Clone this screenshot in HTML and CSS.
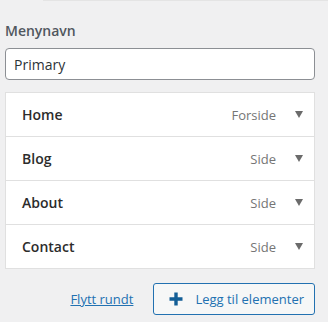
FILE: index.html
```html
<!DOCTYPE html>
<html lang="nb">
<head>
    <meta charset="UTF-8">
    <meta name="viewport" content="width=device-width, initial-scale=1.0">
    <title>Meny</title>
    <link rel="stylesheet" href="styles.css">
</head>
<body>
    <div class="top-edge"></div>
    <div class="panel">
        <label class="menu-label" for="menu-name">Menynavn</label>
        <input class="menu-name" id="menu-name" type="text" value="Primary">

        <ul class="menu-items">
            <li class="menu-item">
                <span class="item-title">Home</span>
                <span class="item-type">Forside</span>
                <span class="item-toggle"></span>
            </li>
            <li class="menu-item">
                <span class="item-title">Blog</span>
                <span class="item-type">Side</span>
                <span class="item-toggle"></span>
            </li>
            <li class="menu-item">
                <span class="item-title">About</span>
                <span class="item-type">Side</span>
                <span class="item-toggle"></span>
            </li>
            <li class="menu-item">
                <span class="item-title">Contact</span>
                <span class="item-type">Side</span>
                <span class="item-toggle"></span>
            </li>
        </ul>

        <div class="actions">
            <a class="reorder" href="#">Flytt rundt</a>
            <button class="add-items" type="button">
                <svg width="16" height="16" viewBox="0 0 16 16"><path d="M8 1.5v13M1.5 8h13" stroke="#135e96" stroke-width="3.4"/></svg>
                Legg til elementer
            </button>
        </div>
    </div>
</body>
</html>
```

FILE: styles.css
```css
body {
    margin: 0;
    background-color: #f0f0f1;
    font-family: "Open Sans", "Noto Sans", sans-serif;
    color: #1e1e1e;
}
.top-edge {
    margin-left: 43px;
    border-top: 1px solid #e4e4e4;
}
.panel {
    width: 310px;
    padding-left: 5px;
}
.menu-label {
    display: block;
    margin-top: 20px;
    font-size: 14px;
    font-weight: 600;
    color: #50575e;
    line-height: 20px;
}
.menu-name {
    display: block;
    box-sizing: border-box;
    width: 100%;
    margin-top: 7px;
    height: 32px;
    padding: 0 8px;
    border: 1px solid #8c8f94;
    border-radius: 4px;
    background: white;
    font-family: inherit;
    font-size: 14px;
    color: #2c3338;
}
.menu-items {
    list-style: none;
    margin: 12px 0 0;
    padding: 0;
    background: white;
    border: 1px solid #e0e0e0;
}
.menu-item {
    display: flex;
    align-items: center;
    height: 43px;
    padding: 0 11px 0 16px;
    border-bottom: 1px solid #e0e0e0;
}
.menu-item:last-child {
    border-bottom: none;
}
.item-title {
    flex: 1;
    font-size: 14px;
    font-weight: 600;
    color: #2c2c2c;
}
.item-type {
    font-size: 13px;
    color: #757575;
}
.item-toggle {
    width: 0;
    height: 0;
    margin-left: 19px;
    border-left: 4px solid transparent;
    border-right: 4px solid transparent;
    border-top: 7px solid #6b6b6b;
}
.actions {
    display: flex;
    justify-content: flex-end;
    align-items: center;
    gap: 20px;
    margin-top: 14px;
}
.reorder {
    font-size: 13px;
    color: #2271b1;
}
.add-items {
    display: flex;
    align-items: center;
    gap: 11px;
    height: 32px;
    padding: 0 10px 0 14px;
    border: 1px solid #2271b1;
    border-radius: 3px;
    background: #f6f7f7;
    font-family: inherit;
    font-size: 13px;
    color: #2271b1;
}
```
